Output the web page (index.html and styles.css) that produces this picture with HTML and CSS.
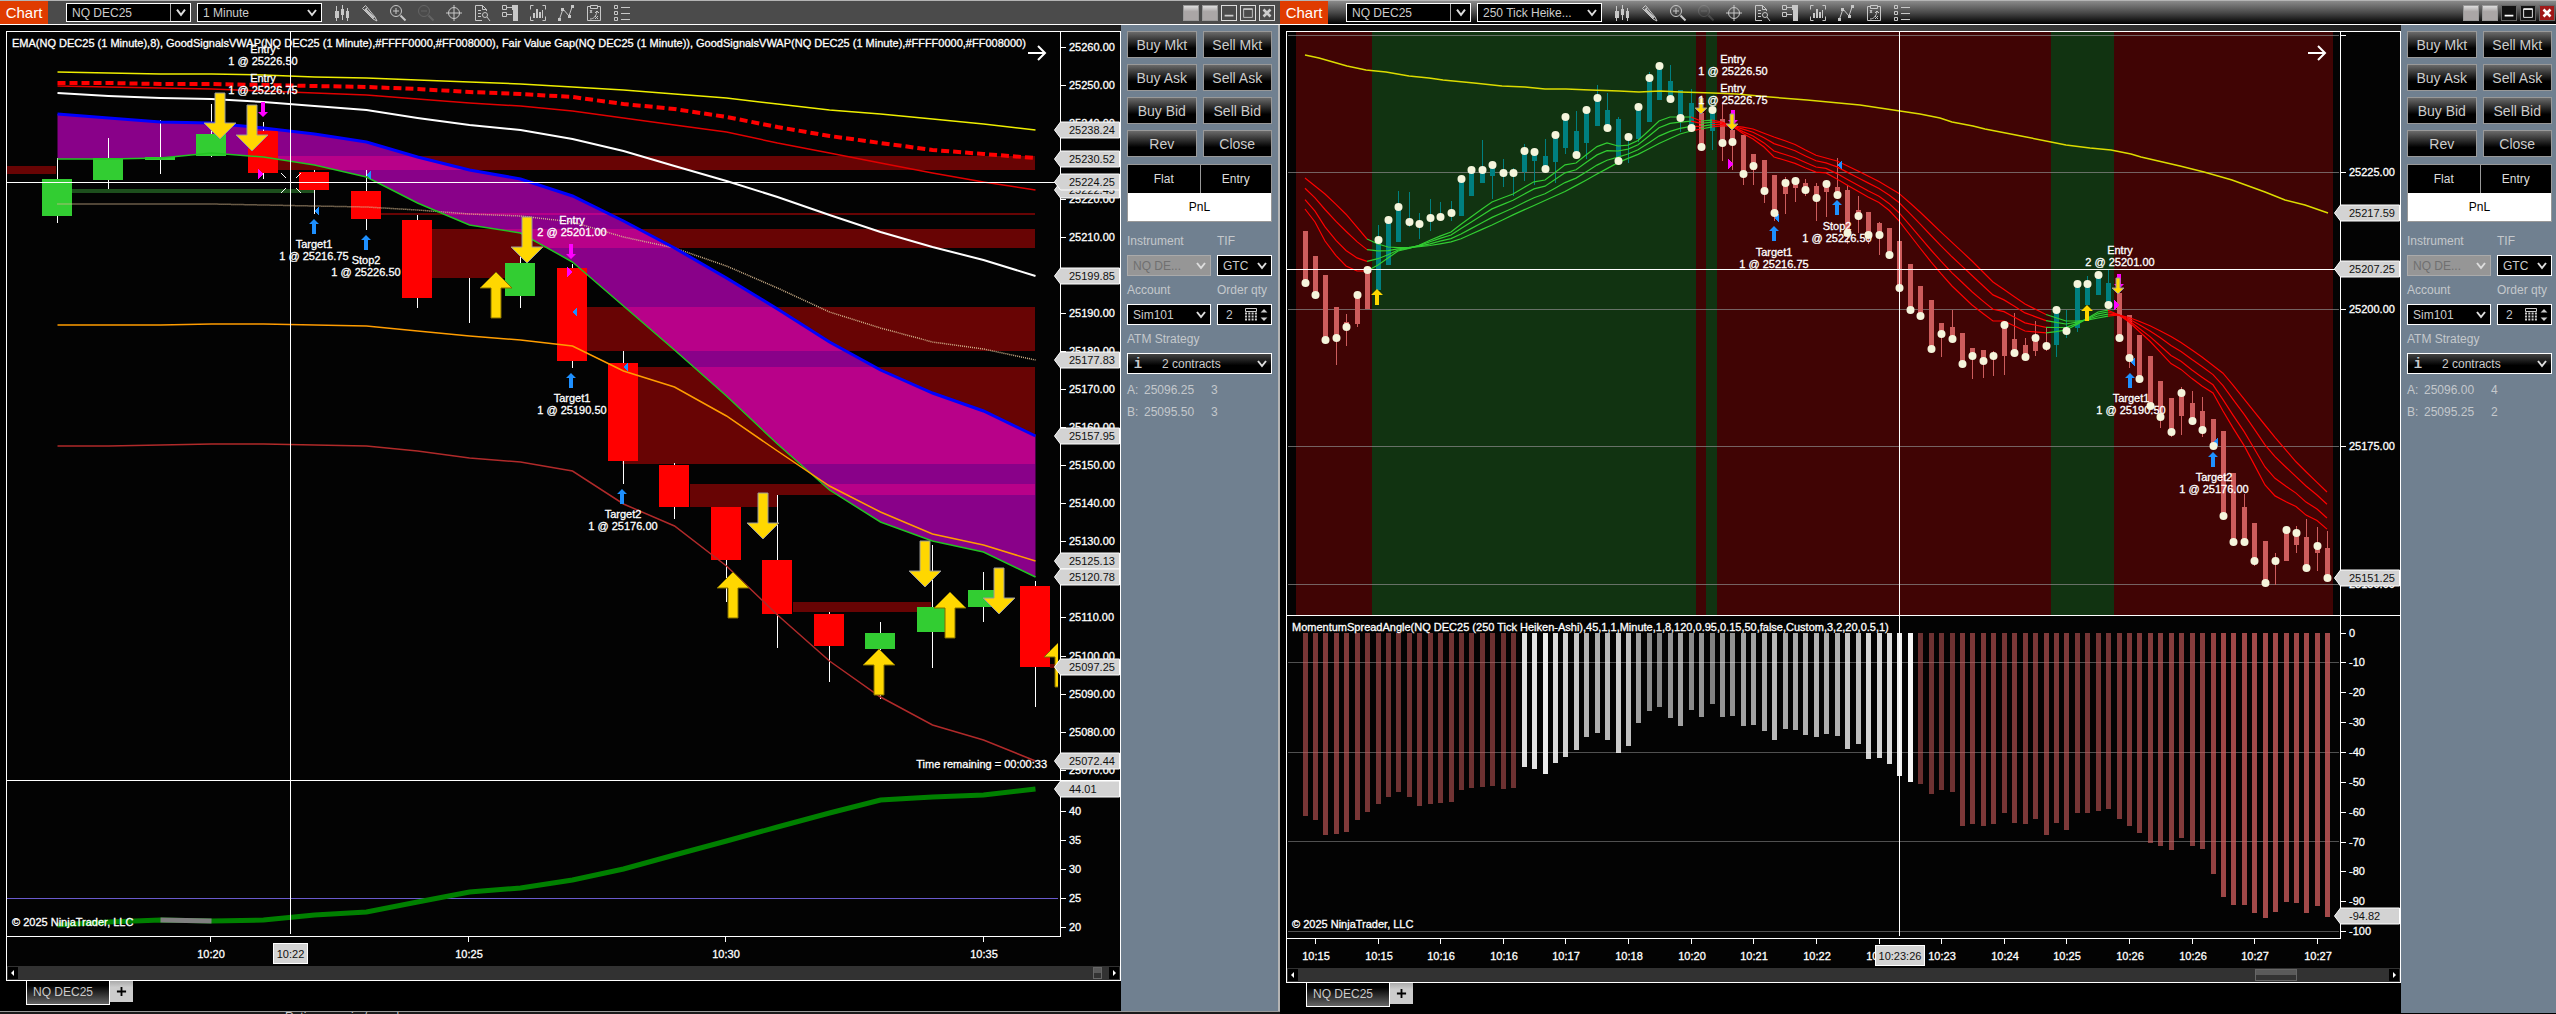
FILE: index.html
```html
<!DOCTYPE html>
<html lang="en">
<head>
    <meta charset="UTF-8">
    <title>Chart - NQ DEC25</title>
    <link rel="stylesheet" href="styles.css">
</head>
<body>
    <svg class="symbols" aria-hidden="true">
        <symbol id="ic-bars" viewBox="0 0 18 18"><path d="M3.500 2v15M9.500 1v15M14.500 4v13" /><path class="solid" d="M2 7h4v7H2zM8 5h3v6H8zM13 7h3v7h-3z" /></symbol>
        <symbol id="ic-pencil" viewBox="0 0 18 18"><path d="M1.500 4.500l3-3 9.500 11.500 2 4-4-2z" /><path class="thick" d="M4 5l9 9" /><path d="M6.500 3.500l-3 3" /></symbol>
        <symbol id="ic-zoomin" viewBox="0 0 18 18"><circle cx="7" cy="7" r="5.500" /><path d="M7 4v6M4 7h6" /><path class="thick" d="M11.500 11.500l5 5" /></symbol>
        <symbol id="ic-zoomout" viewBox="0 0 18 18"><circle cx="7" cy="7" r="5.500" /><path d="M4 7h6" /><path class="thick" d="M11.500 11.500l5 5" /></symbol>
        <symbol id="ic-cross" viewBox="0 0 18 18"><circle cx="9" cy="9" r="5.500" /><path d="M9 1v16M1 9h16" /></symbol>
        <symbol id="ic-doc" viewBox="0 0 18 18"><path d="M9 16.500H2.500v-15h7l4 4V7M9.500 1.500v4h4M5 6.500h3M5 9.500h3M5 12.500h3" /><circle cx="12" cy="11" r="2.500" /><path d="M14 13l3 4" /></symbol>
        <symbol id="ic-trader" viewBox="0 0 18 18"><path d="M1.500 1.500h4v4h-4zM1.500 8.500h4v4h-4zM5 3.500h6M5 10.500h6" /><path class="solid" d="M11 1h6v16h-5V6h-1z" /></symbol>
        <symbol id="ic-series" viewBox="0 0 18 18"><path d="M4.500 1.500h-3v4M13.500 1.500h3v4M4.500 16.500h-3v-4M13.500 16.500h3v-4" /><path class="solid" d="M4 9h2v5H4zM7 5h2v9H7zM10 8h2v6h-2zM13 6h1v8h-1z" /></symbol>
        <symbol id="ic-zigzag" viewBox="0 0 18 18"><path d="M2.500 15L6 5l6 7 3-9" /><path class="solid" d="M1 14h3v3H1zM4 4h3v3H4zM11 11h3v3h-3zM14 1h3v3h-3z" /></symbol>
        <symbol id="ic-strategy" viewBox="0 0 18 18"><path d="M5 2.500H2.500v14h13v-14H13M5.500 1.500h7v3h-7z" /><path d="M5 6l2 3M7 6l-2 3M5 15c4 0 6-3 7-7M10 9l2-2 2 2M10 12l3 3M13 12l-3 3" /></symbol>
        <symbol id="ic-list" viewBox="0 0 18 18"><path d="M1.500 1.500h3v3h-3zM1.500 7.500h3v3h-3zM1.500 13.500h3v3h-3zM8 3.500h9M8 9.500h9M8 15.500h9" /></symbol>
        <symbol id="ic-calc" viewBox="0 0 12 14"><path d="M.5.500h11v3H.5z" /><path d="M0 5.500h12M0 8.500h12M0 11.500h12" stroke-dasharray="2 1.300" stroke-width="2" /></symbol>
    </svg>

    <main class="desktop">
        <section class="window" id="minuteWindow">
            <header class="titlebar">
                <h1>Chart</h1>
                <select class="pick split" aria-label="Instrument"><option>NQ DEC25</option></select>
                <select class="pick" aria-label="Interval"><option>1 Minute</option></select>
                <div class="tools"></div>
                <div class="win-buttons">
                    <button class="blank" aria-label="Link instrument"></button>
                    <button class="blank" aria-label="Link interval"></button>
                    <button aria-label="Minimize"><svg viewBox="0 0 16 16"><path d="M3 11h10" class="w2" /></svg></button>
                    <button aria-label="Maximize"><svg viewBox="0 0 16 16"><path d="M3 3h10v10H3zM3 4h10" /></svg></button>
                    <button aria-label="Close"><svg viewBox="0 0 16 16"><path d="M4 4l8 8M12 4l-8 8" class="w3" /></svg></button>
                </div>
            </header>
            <div class="window-body">
                <div class="chart-area">
                    <div class="frame">
                        <svg id="minuteChart" class="chart" viewBox="7 32 1113 934"></svg>
                        <div class="scrollbar">
                            <button aria-label="Scroll left"><svg viewBox="0 0 10 12"><path d="M6 3v6L3 6z" /></svg></button>
                            <div class="track"><div class="thumb"></div></div>
                            <button aria-label="Scroll right"><svg viewBox="0 0 10 12"><path d="M4 3v6l3-3z" /></svg></button>
                        </div>
                    </div>
                    <nav class="tabs">
                        <a href="#minuteWindow">NQ DEC25</a>
                        <button aria-label="Add tab"><svg viewBox="0 0 12 12"><path d="M6 1v10M1 6h10" /></svg></button>
                    </nav>
                </div>
                <aside class="panel">
                    <div class="orders">
                        <button>Buy Mkt</button><button>Sell Mkt</button>
                        <button>Buy Ask</button><button>Sell Ask</button>
                        <button>Buy Bid</button><button>Sell Bid</button>
                        <button>Rev</button><button>Close</button>
                    </div>
                    <div class="position">
                        <span>Flat</span><span>Entry</span>
                        <span class="pnl">PnL</span>
                    </div>
                    <div class="fields">
                        <label for="inst1">Instrument</label><label for="tif1">TIF</label>
                        <select id="inst1" class="pick" disabled><option>NQ DE...</option></select>
                        <select id="tif1" class="pick"><option>GTC</option></select>
                        <label for="acc1">Account</label><label for="qty1">Order qty</label>
                        <select id="acc1" class="pick"><option>Sim101</option></select>
                        <div class="qty">
                            <input id="qty1" type="text" value="2">
                            <svg class="calc"><use href="#ic-calc" /></svg>
                            <svg class="spin" viewBox="0 0 8 14"><path d="M4 0l4 4H0zM4 14l4-4H0z" /></svg>
                        </div>
                        <label class="wide" for="atm1">ATM Strategy</label>
                        <div class="atm wide"><b>i</b><select id="atm1" class="pick"><option>2 contracts</option></select></div>
                    </div>
                    <dl class="quote">
                        <dt>A:</dt><dd>25096.25</dd><dd>3</dd>
                        <dt>B:</dt><dd>25095.50</dd><dd>3</dd>
                    </dl>
                </aside>
            </div>
            <footer class="behind">Ratio avg. win / avg. loss</footer>
        </section>

        <section class="window active" id="tickWindow">
            <header class="titlebar">
                <h1>Chart</h1>
                <select class="pick split" aria-label="Instrument"><option>NQ DEC25</option></select>
                <select class="pick" aria-label="Interval"><option>250 Tick Heike...</option></select>
                <div class="tools"></div>
                <div class="win-buttons">
                    <button class="blank" aria-label="Link instrument"></button>
                    <button class="blank" aria-label="Link interval"></button>
                    <button aria-label="Minimize"><svg viewBox="0 0 16 16"><path d="M3 11h10" class="w2" /></svg></button>
                    <button aria-label="Maximize"><svg viewBox="0 0 16 16"><path d="M3 3h10v10H3zM3 4h10" /></svg></button>
                    <button class="close" aria-label="Close"><svg viewBox="0 0 16 16"><path d="M4 4l8 8M12 4l-8 8" class="w3" /></svg></button>
                </div>
            </header>
            <div class="window-body">
                <div class="chart-area">
                    <div class="frame">
                        <svg id="tickChart" class="chart" viewBox="7 32 1113 936"></svg>
                        <div class="scrollbar">
                            <button aria-label="Scroll left"><svg viewBox="0 0 10 12"><path d="M6 3v6L3 6z" /></svg></button>
                            <div class="track"><div class="thumb"></div></div>
                            <button aria-label="Scroll right"><svg viewBox="0 0 10 12"><path d="M4 3v6l3-3z" /></svg></button>
                        </div>
                    </div>
                    <nav class="tabs">
                        <a href="#tickWindow">NQ DEC25</a>
                        <button aria-label="Add tab"><svg viewBox="0 0 12 12"><path d="M6 1v10M1 6h10" /></svg></button>
                    </nav>
                </div>
                <aside class="panel">
                    <div class="orders">
                        <button>Buy Mkt</button><button>Sell Mkt</button>
                        <button>Buy Ask</button><button>Sell Ask</button>
                        <button>Buy Bid</button><button>Sell Bid</button>
                        <button>Rev</button><button>Close</button>
                    </div>
                    <div class="position">
                        <span>Flat</span><span>Entry</span>
                        <span class="pnl">PnL</span>
                    </div>
                    <div class="fields">
                        <label for="inst2">Instrument</label><label for="tif2">TIF</label>
                        <select id="inst2" class="pick" disabled><option>NQ DE...</option></select>
                        <select id="tif2" class="pick"><option>GTC</option></select>
                        <label for="acc2">Account</label><label for="qty2">Order qty</label>
                        <select id="acc2" class="pick"><option>Sim101</option></select>
                        <div class="qty">
                            <input id="qty2" type="text" value="2">
                            <svg class="calc"><use href="#ic-calc" /></svg>
                            <svg class="spin" viewBox="0 0 8 14"><path d="M4 0l4 4H0zM4 14l4-4H0z" /></svg>
                        </div>
                        <label class="wide" for="atm2">ATM Strategy</label>
                        <div class="atm wide"><b>i</b><select id="atm2" class="pick"><option>2 contracts</option></select></div>
                    </div>
                    <dl class="quote">
                        <dt>A:</dt><dd>25096.00</dd><dd>4</dd>
                        <dt>B:</dt><dd>25095.25</dd><dd>2</dd>
                    </dl>
                </aside>
            </div>
        </section>
    </main>

    <script src="charts.js"></script>
</body>
</html>
```
FILE: styles.css
```css
* {
    box-sizing: border-box;
}
body {
    margin: 0;
    background: #000;
    color: #fff;
    font-family: "Liberation Sans", Arial, sans-serif;
    font-size: 12px;
}
button, select, input {
    font: inherit;
    color: inherit;
    margin: 0;
    padding: 0;
    border-radius: 0;
}
.symbols {
    position: absolute;
    width: 0;
    height: 0;
}
.desktop {
    display: grid;
    grid-template-columns: 1280fr 1276fr;
    align-items: start;
}
.window {
    border-top: 1px solid #b4b4b4;
    min-width: 0;
}

/* title bar */
.titlebar {
    display: flex;
    align-items: center;
    height: 24px;
    padding-right: 5px;
    background: #4b4b4b;
    border-bottom: 1px solid #fff;
}
.active .titlebar {
    padding-right: 1px;
    background: linear-gradient(#8a8a8a, #4a4a4a 50%, #000);
}
.titlebar h1 {
    width: 48px;
    height: 23px;
    margin: 0 18px 0 0;
    background: #e03c00;
    font-size: 15px;
    font-weight: normal;
    line-height: 24px;
    text-align: center;
}
.pick {
    appearance: none;
    height: 21px;
    padding: 0 20px 0 5px;
    border: 1px solid #fff;
    background: #000 url("data:image/svg+xml,%3Csvg xmlns='http://www.w3.org/2000/svg' width='10' height='8'%3E%3Cpath d='M1 1l4 5 4-5' fill='none' stroke='%23ddd' stroke-width='2'/%3E%3C/svg%3E") no-repeat right 4px center;
    color: #ccc;
    text-overflow: ellipsis;
}
.titlebar .pick {
    width: 125px;
    height: 19px;
    margin-right: 6px;
}
.titlebar .split {
    background-image: url("data:image/svg+xml,%3Csvg xmlns='http://www.w3.org/2000/svg' width='16' height='18'%3E%3Cpath d='M.5 0v18' stroke='%23aaa'/%3E%3Cpath d='M7 6l4 5 4-5' fill='none' stroke='%23ddd' stroke-width='2'/%3E%3C/svg%3E");
}
.tools {
    display: flex;
    gap: 10px;
    flex: 1;
    padding-left: 5px;
}
.tools button {
    width: 18px;
    height: 18px;
    border: 0;
    background: none;
}
.tools svg {
    display: block;
    width: 18px;
    height: 18px;
    fill: none;
    stroke: #c8c8c8;
}
.solid {
    fill: #c8c8c8;
    stroke: none;
}
.thick {
    stroke-width: 2;
}
.tools button:disabled {
    opacity: 0.2;
}
.win-buttons {
    display: flex;
    gap: 3px;
}
.win-buttons button {
    width: 16px;
    height: 16px;
    border: 1px solid #ddd;
    background: #4b4b4b;
}
.win-buttons .blank {
    border-color: #999;
    background: linear-gradient(#ddd, #aaa6a6 40%);
}
.win-buttons svg {
    display: block;
    width: 14px;
    height: 14px;
    fill: none;
    stroke: #ccc;
}
.active .win-buttons svg {
    stroke: #fff;
}
.active .win-buttons button:not(.blank) {
    border-color: #666;
    background: #111;
}
.active .win-buttons .close {
    background: #a01818 !important;
}
.w2 {
    stroke-width: 2;
}
.w3 {
    stroke-width: 3;
}

/* chart */
.window-body {
    display: flex;
}
.chart-area {
    flex: 1;
    min-width: 0;
    padding: 6px 0 0 6px;
    background: linear-gradient(90deg, #000, #444 50%, #1c1c1c) no-repeat 0 0 / 100% 6px #000;
}
.frame {
    border: 1px solid #fff;
    background: #030303;
}
.chart {
    display: block;
    width: 100%;
    height: auto;
    fill: #fff;
    font-size: 11px;
    shape-rendering: crispEdges;
}
.chart polyline, .chart .outline {
    fill: none;
    shape-rendering: auto;
}
.chart circle, .chart .smooth {
    shape-rendering: auto;
}
.chart .middle {
    text-anchor: middle;
}
.chart .end {
    text-anchor: end;
}
.chart .dark {
    fill: #111;
    stroke: none;
}
.scrollbar {
    display: flex;
    height: 14px;
    padding: 1px;
    background: #323232;
}
.scrollbar button {
    width: 10px;
    height: 12px;
    border: 0;
    background: #000;
}
.scrollbar svg {
    display: block;
    fill: #fff;
}
.track {
    flex: 1;
    display: flex;
    justify-content: flex-end;
    padding-right: 7px;
}
.active .track {
    padding-right: 92px;
}
.thumb {
    width: 9px;
    border: 1px solid #666;
    background: linear-gradient(#5a5a5a 50%, #333 50%);
}
.active .thumb {
    width: 42px;
}
.tabs {
    display: flex;
    align-items: flex-start;
    height: 30px;
    padding-left: 20px;
}
.tabs a {
    width: 84px;
    height: 24px;
    padding-left: 6px;
    border: 1px solid #fff;
    border-top: 0;
    background: linear-gradient(#000 20%, #666);
    color: #ccc;
    line-height: 22px;
    text-decoration: none;
}
.tabs button {
    width: 23px;
    height: 21px;
    border: 0;
    background: linear-gradient(#aaa, #ccc 30%);
}
.tabs svg {
    display: block;
    width: 11px;
    margin: auto;
    stroke: #000;
    stroke-width: 2;
}
.behind {
    height: 3px;
    padding-left: 285px;
    border-top: 1px solid #999;
    background: #1a1a1a;
    color: #ccc;
    line-height: 10px;
    overflow: hidden;
}

/* order panel */
.panel {
    flex: none;
    width: 159px;
    padding: 6px 6px 0;
    border-right: 2px solid #b4b4b4;
    background: #708090;
    color: #c4c8cc;
}
.active .panel {
    width: 155px;
    padding-right: 4px;
    border-right: 0;
}
.orders {
    display: grid;
    grid-template-columns: 1fr 1fr;
    gap: 6px;
}
.orders button {
    height: 27px;
    border: 1px solid #999;
    background: linear-gradient(#6a6a6a, #000 65%);
    color: #ccc;
    font-size: 14px;
}
.position {
    display: grid;
    grid-template-columns: 1fr 1fr;
    margin: 7px 0 11px;
    border: 1px solid #999;
    background: #000;
    line-height: 28px;
    text-align: center;
    color: #ddd;
}
.position span + span {
    border-left: 1px solid #999;
}
.position .pnl {
    grid-column: 1 / -1;
    background: #fff;
    color: #000;
    border: 0 !important;
}
.fields {
    display: grid;
    grid-template-columns: 84px 55px;
    gap: 6px;
}
.fields label {
    height: 16px;
    line-height: 16px;
}
.wide {
    grid-column: 1 / -1;
}
.panel .pick {
    background-color: #000;
    width: 100%;
}
.panel .pick:disabled {
    border-color: #aaa;
    background-color: #969696;
    color: #707070;
    opacity: 1;
}
.qty {
    display: flex;
    align-items: center;
    height: 21px;
    padding: 0 3px 0 8px;
    border: 1px solid #fff;
    background: #000;
}
.qty input {
    width: 19px;
    border: 0;
    background: none;
}
.calc {
    width: 12px;
    height: 14px;
    fill: none;
    stroke: #ccc;
}
.spin {
    width: 8px;
    height: 12px;
    margin-left: auto;
    fill: #ccc;
}
.atm {
    display: flex;
    align-items: center;
    height: 21px;
    border: 1px solid #fff;
    background: linear-gradient(#444, #000 60%);
}
.atm b {
    width: 20px;
    text-align: center;
    font-family: "Liberation Mono", monospace;
    font-size: 14px;
}
.atm .pick {
    flex: 1;
    height: 19px;
    padding-left: 14px;
    border: 0;
    background-color: transparent;
}
.quote {
    display: grid;
    grid-template-columns: 17px 67px 1fr;
    margin: 5px 0 0;
    line-height: 22px;
}
.quote dd {
    margin: 0;
}
```
FILE: charts.js
```js
const WHITE = '#fff', GREEN = '#32cd32', RED = '#ff0000', TEAL = '#008080', INDIAN = '#cd5c5c';
const FVG = '#680404', GOLD = '#ffd700', BUY = '#1e90ff', SELL = '#ff00ff';

// toolbar icons, same set in every window
const tools = {
    bars: 'Bar type', pencil: 'Draw', zoomin: 'Zoom in', zoomout: 'Zoom out', cross: 'Cursor', doc: 'Data box',
    trader: 'Chart trader', series: 'Data series', zigzag: 'Indicators', strategy: 'Strategies', list: 'Properties'
};
document.querySelectorAll('.tools').forEach(box => {
    box.innerHTML = Object.entries(tools).map(([id, name]) =>
        `<button aria-label="${name}" ${id === 'zoomout' ? 'disabled' : ''}><svg><use href="#ic-${id}" /></svg></button>`).join('');
});

// drawing helpers, all return svg markup
const rect = (x1, y1, x2, y2, fill, extra = '') =>
    `<rect x="${x1}" y="${y1}" width="${x2 - x1}" height="${y2 - y1}" fill="${fill}" ${extra}/>`;
const text = (x, y, str, cls = '') => `<text x="${x}" y="${y}" stroke="#fff" stroke-width="0.3" class="${cls}">${str}</text>`;
const line = (pts, color, width = 1.5, extra = '') =>
    `<polyline points="${pts.map(p => p.join()).join(' ')}" stroke="${color}" stroke-width="${width}" ${extra}/>`;

// arrow with its tip at x,y; dir 1 points up, -1 points down
function arrow(x, y, dir, color, half, head, length, shaft, edge = 'none') {
    const h = y + dir * head, e = y + dir * length;
    return `<path class="smooth" fill="${color}" stroke="${edge}" d="M${x} ${y}L${x + half} ${h}H${x + shaft}V${e}H${x - shaft}V${h}H${x - half}Z"/>`;
}
const big = (x, y, dir) => arrow(x, y, dir, GOLD, 16, 16, 46, 5, dir > 0 ? '#806c00' : '#999');
const mid = (x, y, dir) => arrow(x, y, dir, GOLD, 6, 6, 16, 2, dir > 0 ? 'none' : '#999');
const small = (x, y, dir, color) => arrow(x, y, dir, color, 5, 5, 15, 2);
const fill = (x, y, dir, color) => `<path fill="${color}" d="M${x} ${y}l${dir * 5} -5v10z"/>`;
const label = (x, y, a, b) => text(x, y, a, 'middle') + text(x, y + 12, b, 'middle');

const tag = (y, str) => `<path class="smooth" fill="#d3d3d3" stroke="#fff" d="M1054.500 ${y}L1060.500 ${y - 8}H1119.500V${y + 8}H1060.500Z"/>`
    + text(1069, y + 4, str, 'dark');
const tick = (y, str) => rect(1061, Math.round(y), 1066, Math.round(y) + 1, WHITE) + text(1069, Math.round(y) + 4, str);
const timeTag = (x, y, w, str) => `<rect x="${x}" y="${y}" width="${w}" height="20" fill="#d3d3d3" stroke="#fff"/>`
    + text(x + w / 2, y + 14, str, 'middle dark');
const goTo = '<path class="outline" stroke="#fff" stroke-width="2" d="M1028 53h17M1038 46l7 7-7 7"/>';

// ---------- 1 minute chart ----------
function drawMinute() {
    const X = i => Math.round(57 + 51.45 * i);
    const series = ys => ys.map((y, i) => [X(i) + 0.5, y]);
    let s = '';

    const gaps = [
        [7, 166, 56, 174], [278, 156, 1035, 170], [381, 213, 1035, 215], [432, 229, 520, 278], [520, 229, 1035, 248],
        [587, 307, 1035, 351], [622, 367, 1035, 464], [690, 484, 777, 507], [777, 484, 1035, 495],
        [793, 602, 931, 612], [1050, 664, 1058, 668]
    ];
    gaps.forEach(g => s += rect(...g, FVG));
    s += rect(72, 189, 314, 193, '#1d4f1d');

    const slow = series([114, 118, 122, 123, 128, 134, 142, 157, 170, 179, 196, 221, 248, 278, 309, 342, 370, 393, 411, 436]);
    const ema = series([159, 159, 158, 153, 157, 165, 177, 203, 225, 233, 262, 306, 350, 396, 444, 490, 522, 541, 552, 577]);
    s += `<polygon class="smooth" fill="#ff00ff" fill-opacity="0.533" points="${slow.concat([...ema].reverse()).join(' ')}"/>`;

    // high, body top, body bottom, low, up candle
    const candles = [
        [158, 179, 216, 223, 1], [138, 158, 180, 189, 1], [120, 157, 160, 174, 1], [104, 134, 156, 157, 1],
        [122, 131, 173, 179, 0], [170, 172, 190, 214, 0], [170, 191, 219, 230, 0], [215, 220, 298, 308, 0],
        [278, 278, 278, 323, 0], [250, 263, 296, 308, 1], [264, 268, 361, 368, 0], [351, 363, 461, 484, 0],
        [463, 465, 507, 519, 0], [507, 507, 560, 602, 0], [495, 560, 614, 648, 0], [612, 614, 646, 682, 0],
        [622, 633, 649, 699, 1], [545, 607, 632, 668, 1], [572, 590, 607, 622, 1], [581, 586, 667, 707, 0]
    ];
    candles.forEach(([h, t, b, l, up], i) => {
        s += rect(X(i), h, X(i) + 1, l, WHITE) + rect(X(i) - 15, t, X(i) + 15, b, up ? GREEN : RED);
    });

    s += line(series([72, 73, 74, 74, 75, 77, 78, 80, 82, 84, 87, 90, 94, 98, 104, 110, 114, 119, 124, 130]), '#eeee00');
    s += line(series([86, 87, 88, 89, 91, 93, 95, 99, 103, 106, 111, 118, 125, 132, 143, 153, 163, 173, 182, 190]), '#e00000');
    s += line(series([83, 83, 84, 84, 85, 86, 87, 89, 92, 94, 97, 104, 109, 117, 127, 136, 143, 150, 154, 158]), RED, 4, 'stroke-dasharray="8 4"');
    s += line(series([93, 96, 98, 99, 102, 106, 110, 118, 125, 130, 139, 151, 166, 181, 197, 215, 232, 247, 260, 276]), WHITE, 2);
    s += line(series([204, 204, 204, 204, 205, 206, 207, 210, 214, 216, 222, 237, 248, 266, 288, 312, 328, 342, 349, 360]), '#d2b48c', 1.5, 'stroke-dasharray="1 1"');
    s += line(slow, '#0000ff', 3) + line(ema, '#22c322');
    s += line(series([325, 325, 325, 324, 324, 325, 326, 331, 336, 340, 346, 371, 387, 416, 451, 486, 512, 534, 545, 561]), '#ff9d00');
    s += line(series([446, 446, 445, 444, 444, 445, 446, 451, 458, 462, 471, 504, 526, 566, 615, 661, 697, 725, 740, 761]), '#b02a2a');

    // trades
    s += small(263, 117, -1, SELL) + small(571, 259, -1, SELL);
    [[314, 219], [366, 235], [571, 373], [622, 489]].forEach(([x, y]) => s += small(x, y, 1, BUY));
    s += fill(263, 174, -1, SELL) + fill(572, 272, -1, SELL);
    [[314, 211], [366, 175], [572, 312], [623, 367]].forEach(([x, y]) => s += fill(x, y, 1, BUY));
    [[220, 139], [252, 151], [527, 263], [763, 539], [925, 587], [999, 614]].forEach(([x, y]) => s += big(x, y, -1));
    [[496, 272], [733, 572], [879, 649], [950, 592], [1060, 641]].forEach(([x, y]) => s += big(x, y, 1));
    s += rect(1058, 600, 1120, 720, '#030303');
    s += label(263, 53, 'Entry', '1 @ 25226.50') + label(263, 82, 'Entry', '1 @ 25226.75');
    s += label(314, 248, 'Target1', '1 @ 25216.75') + label(366, 264, 'Stop2', '1 @ 25226.50');
    s += label(572, 224, 'Entry', '2 @ 25201.00') + label(572, 402, 'Target1', '1 @ 25190.50');
    s += label(623, 518, 'Target2', '1 @ 25176.00');

    s += text(12, 47, 'EMA(NQ DEC25 (1 Minute),8), GoodSignalsVWAP(NQ DEC25 (1 Minute),#FFFF0000,#FF008000), Fair Value Gap(NQ DEC25 (1 Minute)), GoodSignalsVWAP(NQ DEC25 (1 Minute),#FFFF0000,#FF008000)');
    s += text(1047, 768, 'Time remaining = 00:00:33', 'end') + goTo;

    // lower pane
    s += rect(7, 898, 1058, 899, '#6a5acd');
    const angle = series([925, 922, 920, 921, 920, 915, 912, 902, 892, 888, 880, 869, 855, 841, 827, 813, 800, 797, 795, 789]);
    s += line(angle, '#008000', 5) + line(angle.slice(2, 4), '#808080', 5);
    s += text(12, 926, '© 2025 NinjaTrader, LLC');

    // axes
    for (let i = 0; i < 20; i++) s += tick(46.7 + i * 38.05, (25260 - i * 10) + '.00');
    for (let i = 0; i < 5; i++) s += tick(811 + i * 29, 40 - i * 5);
    s += rect(7, 780, 1120, 781, WHITE) + rect(7, 936, 1061, 937, WHITE) + rect(1060, 32, 1061, 937, WHITE);
    ['10:20', '10:25', '10:30', '10:35'].forEach((t, i) => {
        const x = 210 + Math.round(257.7 * i);
        s += rect(x, 937, x + 1, 942, WHITE) + text(x + 1, 958, t, 'middle');
    });

    // crosshair
    s += rect(7, 182, 1055, 183, WHITE) + rect(290, 32, 291, 934, WHITE);
    s += '<path class="outline" stroke="#fff" d="M281 173l5 5M301 173l-5 5M281 193l5-5M301 193l-5-5"/>';
    [[130, '25238.24'], [159, '25230.52'], [190, '25222.45'], [182, '25224.25'], [276, '25199.85'], [360, '25177.83'],
        [436, '25157.95'], [561, '25125.13'], [577, '25120.78'], [667, '25097.25'], [761, '25072.44'], [789, '44.01']
    ].forEach(t => s += tag(...t));
    s += timeTag(273.5, 943.5, 34, '10:22');
    return s;
}

// ---------- 250 tick Heiken-Ashi chart ----------
function drawTick() {
    const X = i => Math.round(24.5 + 10.437 * i);
    let s = '';

    const zones = [16, 92, 416, 426, 437, 771, 834, 1053];
    zones.slice(1).forEach((x, i) => s += rect(zones[i], 32, x, 615, i % 2 ? '#113311' : '#400404'));
    [35, 172, 309, 446, 584].forEach(y => s += rect(8, y, 1059, y + 1, '#8c8c8c', 'fill-opacity="0.7"'));
    [662, 752, 841, 931].forEach(y => s += rect(8, y, 1059, y + 1, '#505050'));

    // high, body top, body bottom, low, close dot
    const bars = [
        [231, 231, 283, 283, 283], [256, 256, 295, 295, 295], [275, 275, 340, 340, 340], [307, 307, 338, 365, 338], [314, 322, 330, 346, 327],
        [295, 295, 324, 327, 295], [270, 270, 309, 309, 270], [225, 240, 290, 290, 240], [216, 220, 265, 265, 220], [191, 207, 242, 242, 207],
        [192, 222, 222, 227, 222], [213, 224, 224, 239, 224], [199, 218, 218, 231, 218], [202, 217, 217, 220, 217], [201, 213, 216, 221, 213],
        [179, 179, 216, 216, 179], [170, 170, 196, 196, 170], [140, 170, 183, 183, 170], [165, 165, 176, 199, 165], [159, 173, 173, 187, 173],
        [168, 173, 173, 196, 173], [144, 151, 172, 181, 151], [152, 152, 161, 185, 152], [139, 156, 169, 169, 169], [135, 135, 162, 183, 135],
        [117, 117, 148, 154, 117], [111, 131, 155, 155, 155], [106, 110, 143, 159, 110], [85, 98, 126, 126, 98], [93, 110, 128, 128, 128],
        [117, 119, 161, 161, 161], [137, 137, 137, 163, 137], [103, 107, 139, 142, 107], [72, 78, 122, 122, 78], [66, 66, 100, 100, 66],
        [65, 81, 99, 99, 99], [90, 90, 118, 132, 118], [89, 103, 128, 128, 128], [113, 113, 147, 147, 147], [110, 110, 131, 150, 110],
        [102, 119, 143, 161, 143], [130, 130, 142, 170, 142], [135, 135, 174, 185, 174], [154, 154, 170, 185, 166], [160, 160, 191, 203, 191],
        [175, 175, 213, 221, 213], [177, 183, 194, 214, 183], [177, 181, 188, 202, 181], [179, 183, 190, 196, 190], [183, 186, 198, 221, 198],
        [180, 184, 192, 217, 184], [158, 187, 195, 195, 195], [185, 190, 233, 244, 233], [196, 210, 216, 233, 216], [212, 212, 235, 244, 235],
        [222, 223, 235, 255, 235], [228, 228, 255, 255, 255], [241, 241, 288, 288, 288], [264, 264, 310, 310, 310], [286, 286, 316, 316, 316],
        [300, 300, 349, 349, 349], [323, 323, 334, 357, 334], [310, 327, 339, 339, 339], [333, 333, 364, 364, 364], [348, 348, 356, 379, 356],
        [350, 350, 361, 378, 361], [351, 356, 356, 376, 356], [325, 325, 356, 375, 325], [313, 339, 353, 353, 353], [338, 345, 357, 357, 357],
        [321, 338, 351, 356, 338], [328, 346, 346, 351, 346], [310, 310, 345, 357, 310], [310, 331, 331, 338, 331], [284, 284, 328, 332, 284],
        [276, 284, 305, 305, 284], [275, 275, 295, 295, 275], [270, 283, 305, 305, 305], [293, 293, 338, 338, 338], [315, 315, 358, 368, 358],
        [335, 335, 379, 379, 379], [356, 356, 406, 406, 406], [381, 381, 417, 428, 417], [398, 398, 432, 437, 432], [387, 393, 416, 435, 393],
        [391, 403, 421, 421, 421], [397, 411, 430, 437, 430], [419, 419, 446, 446, 446], [431, 431, 516, 516, 516], [473, 473, 542, 542, 542],
        [494, 507, 542, 542, 542], [523, 523, 561, 566, 561], [541, 541, 583, 583, 583], [553, 561, 561, 585, 561], [530, 530, 561, 561, 530],
        [526, 533, 545, 553, 533], [519, 537, 568, 568, 568], [527, 546, 553, 571, 546], [531, 548, 578, 578, 578]
    ];
    const isUp = i => (i > 6 && i < 38) || i === 39 || (i > 71 && i < 78);
    bars.forEach(([h, t, b, l], i) => {
        const c = isUp(i) ? TEAL : INDIAN;
        s += rect(X(i), h, X(i) + 1, l, c) + rect(X(i) - 2, t, X(i) + 3, b, c);
    });

    s += line([
        [25, 55], [39, 58], [53, 62], [67, 66], [86, 70], [106, 72], [129, 76], [149, 78], [163, 80], [194, 83], [222, 86], [245, 87],
        [265, 89], [286, 89], [310, 90], [339, 91], [359, 92], [380, 91], [400, 92], [433, 93], [457, 94], [490, 97], [527, 100],
        [580, 105], [620, 111], [640, 114], [660, 118], [672, 122], [693, 126], [705, 129], [741, 136], [771, 142], [786, 145],
        [810, 148], [831, 150], [851, 154], [861, 157], [900, 166], [924, 172], [952, 180], [985, 192], [1005, 200], [1025, 205], [1048, 213]
    ], '#dcdc00');

    // moving average ribbon: slowest and fastest line, two more between them
    const slowest = [
        [25, 178], [45, 194], [65, 213], [87, 239], [98, 244], [108, 247], [122, 248], [147, 246], [176, 241], [196, 232], [212, 225],
        [237, 213], [253, 206], [286, 191], [310, 178], [339, 162], [359, 154], [380, 143], [400, 134], [411, 131], [421, 129], [431, 127],
        [442, 126], [457, 126], [473, 129], [494, 137], [514, 144], [535, 155], [557, 161], [580, 172], [600, 182], [620, 194], [640, 212],
        [664, 235], [689, 258], [713, 282], [745, 304], [767, 315], [786, 321], [802, 321], [818, 318], [829, 316], [839, 315], [851, 318],
        [873, 327], [896, 339], [922, 357], [944, 374], [965, 400], [993, 435], [1017, 463], [1048, 493]
    ];
    const fastest = [
        [25, 209], [35, 222], [45, 241], [57, 257], [67, 267], [77, 271], [87, 271], [98, 265], [118, 251], [135, 247], [155, 238],
        [171, 232], [184, 222], [212, 202], [233, 194], [253, 182], [265, 180], [286, 164], [296, 163], [316, 147], [327, 143], [338, 146],
        [349, 145], [359, 140], [380, 120], [390, 117], [411, 117], [421, 121], [431, 120], [442, 122], [452, 126], [462, 133], [473, 139],
        [484, 147], [494, 157], [514, 163], [535, 172], [547, 173], [567, 185], [588, 197], [604, 205], [620, 222], [640, 248], [656, 268],
        [672, 286], [693, 306], [713, 321], [724, 321], [745, 331], [767, 333], [786, 330], [796, 325], [818, 312], [829, 310], [839, 315],
        [849, 322], [861, 333], [873, 344], [890, 363], [902, 370], [916, 382], [933, 393], [948, 420], [965, 447], [985, 485], [996, 497],
        [1017, 507], [1027, 516], [1038, 521], [1048, 530]
    ];
    function at(pts, x) {
        let k = 1;
        while (k < pts.length - 1 && pts[k][0] < x) k++;
        const [x1, y1] = pts[k - 1], [x2, y2] = pts[k];
        return y1 + (y2 - y1) * (x - x1) / (x2 - x1);
    }
    const runs = [[0, 6, 0], [6, 37, 1], [37, 38, 0], [38, 39, 1], [39, 71, 0], [71, 77, 1], [77, 98, 0]];
    [0, 0.33, 0.7, 1].forEach(w => runs.forEach(([from, to, up]) => {
        const pts = [];
        for (let i = from; i <= to; i++) pts.push([X(i), (at(slowest, X(i)) * (1 - w) + at(fastest, X(i)) * w).toFixed(1)]);
        s += line(pts, up ? GREEN : RED, 1.2);
    }));

    // trades
    s += small(453, 125, -1, SELL) + small(839, 289, -1, SELL);
    s += mid(421, 114, -1) + mid(452, 130, -1) + mid(838, 294, -1) + mid(97, 289, 1) + mid(807, 305, 1);
    s += fill(453, 164, -1, SELL) + fill(839, 305, -1, SELL);
    [[557, 165], [494, 218], [850, 362], [933, 442]].forEach(([x, y]) => s += fill(x, y, 1, BUY));
    [[557, 200], [494, 226], [850, 373], [933, 452]].forEach(([x, y]) => s += small(x, y, 1, BUY));
    s += label(453, 63, 'Entry', '1 @ 25226.50') + label(453, 92, 'Entry', '1 @ 25226.75');
    s += label(557, 230, 'Stop2', '1 @ 25226.50') + label(494, 256, 'Target1', '1 @ 25216.75');
    s += label(840, 254, 'Entry', '2 @ 25201.00') + label(851, 402, 'Target1', '1 @ 25190.50');
    s += label(934, 481, 'Target2', '1 @ 25176.00');
    bars.forEach((b, i) => s += `<circle cx="${X(i) + 0.5}" cy="${b[4]}" r="4" fill="#f5f5dc"/>`);

    // momentum histogram
    const momentum = [
        183, 187, 202, 201, 199, 187, 179, 171, 164, 159, 164, 173, 171, 170, 169, 157, 155, 154, 153, 156, 155,
        134, 136, 141, 130, 124, 117, 104, 100, 107, 120, 113, 90, 78, 74, 85, 93, 77, 84, 71, 84, 83, 93, 92, 98, 107, 96, 97, 102,
        104, 101, 103, 116, 111, 126, 125, 131, 143, 149,
        151, 161, 157, 159, 193, 191, 193, 191, 180, 190, 191, 186, 202, 190, 197, 180, 180, 178, 176, 186, 193, 200, 210, 213, 217,
        205, 213, 216, 241, 264, 272, 272, 280, 285, 279, 269, 270, 280, 273, 284
    ];
    momentum.forEach((len, i) => {
        const neutral = i > 20 && i < 59;
        const alpha = neutral ? 0.5 + (len - 71) / 165 : 0.52 + (len - 155) / 460;
        s += rect(X(i) - 2, 633, X(i) + 3, 633 + len, neutral ? WHITE : INDIAN, `fill-opacity="${alpha.toFixed(2)}"`);
    });
    s += text(12, 631, 'MomentumSpreadAngle(NQ DEC25 (250 Tick Heiken-Ashi),45,1,1,Minute,1,8,120,0.95,0.15,50,false,Custom,3,2,20,0.5,1)');
    s += text(12, 928, '© 2025 NinjaTrader, LLC') + goTo;

    // axes
    s += rect(1061, 35, 1066, 36, WHITE);
    [[172, 25225], [309, 25200], [446, 25175], [584, 25150]].forEach(([y, p]) => s += tick(y, p + '.00'));
    for (let i = 0; i <= 10; i++) s += tick(632.5 + i * 29.87, i ? -10 * i : 0);
    s += rect(7, 615, 1120, 616, WHITE) + rect(7, 938, 1061, 939, WHITE) + rect(1060, 32, 1061, 939, WHITE);
    ['10:15', '10:15', '10:16', '10:16', '10:17', '10:18', '10:20', '10:21', '10:22', '10:23', '10:23', '10:24', '10:25', '10:26',
        '10:26', '10:27', '10:27'].forEach((t, i) => {
        const x = X(1 + 6 * i);
        s += rect(x, 939, x + 1, 944, WHITE) + text(x + 1, 960, t, 'middle');
    });

    // crosshair
    s += rect(7, 269, 1055, 270, WHITE) + rect(619, 32, 620, 936, WHITE);
    [[213, '25217.59'], [269, '25207.25'], [578, '25151.25'], [916, '-94.82']].forEach(t => s += tag(...t));
    s += timeTag(595.5, 945.5, 49, '10:23:26');
    return s;
}

document.getElementById('minuteChart').innerHTML = drawMinute();
document.getElementById('tickChart').innerHTML = drawTick();
```
